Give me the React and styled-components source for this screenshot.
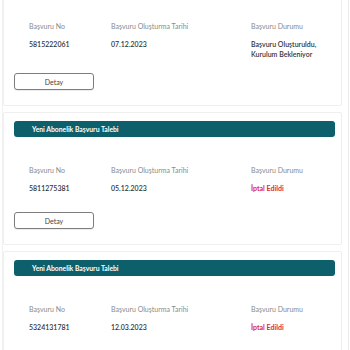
import React from "react";
import styled, { createGlobalStyle } from "styled-components";

const GlobalStyle = createGlobalStyle`
  html, body {
    margin: 0;
    padding: 0;
    background: #ffffff;
    overflow: hidden;
  }
  body {
    font-family: Lato, "Noto Sans", sans-serif;
  }
`;

const applications = [
  {
    no: "5815222061",
    date: "07.12.2023",
    status: "Başvuru Oluşturuldu, Kurulum Bekleniyor",
    cancelled: false,
  },
  {
    no: "5811275381",
    date: "05.12.2023",
    status: "İptal Edildi",
    cancelled: true,
  },
  {
    no: "5324131781",
    date: "12.03.2023",
    status: "İptal Edildi",
    cancelled: true,
  },
];

export default function App() {
  return (
    <>
      <GlobalStyle />
      <Page>
        <List>
          {applications.map((app) => (
            <Card key={app.no}>
              <CardHeader>Yeni Abonelik Başvuru Talebi</CardHeader>
              <InfoRow>
                <Cell>
                  <Label>Başvuru No</Label>
                  <Value>{app.no}</Value>
                </Cell>
                <Cell>
                  <Label>Başvuru Oluşturma Tarihi</Label>
                  <Value>{app.date}</Value>
                </Cell>
                <Cell>
                  <Label>Başvuru Durumu</Label>
                  <Value $danger={app.cancelled}>{app.status}</Value>
                </Cell>
              </InfoRow>
              <DetailButton type="button">Detay</DetailButton>
            </Card>
          ))}
        </List>
      </Page>
    </>
  );
}

const Page = styled.div`
  width: 345px;
  height: 350px;
  margin-left: 2px;
  border-left: 1px solid #f1f1f1;
  border-right: 1px solid #ececec;
  overflow: hidden;
`;

const List = styled.div`
  display: flex;
  flex-direction: column;
  gap: 6px;
  margin-top: -32px;
  padding-right: 6px;
`;

const Card = styled.article`
  display: flex;
  flex-direction: column;
  align-items: flex-start;
  background: #ffffff;
  border: 1px solid #efefef;
  border-radius: 2px;
  padding: 8px 6px 15px 10px;
`;

const CardHeader = styled.header`
  align-self: stretch;
  height: 16px;
  display: flex;
  align-items: center;
  padding-left: 18px;
  background: #0d5f6c;
  border-radius: 3px;
  color: #ffffff;
  font-size: 6.8px;
  font-weight: 700;
`;

const InfoRow = styled.div`
  display: grid;
  grid-template-columns: 82px 140px 1fr;
  align-self: stretch;
  margin-top: 29px;
  padding-left: 15px;
`;

const Cell = styled.div`
  display: flex;
  flex-direction: column;
  gap: 8px;
`;

const Label = styled.span`
  font-size: 7px;
  line-height: 9px;
  color: #8a8a8a;
`;

const Value = styled.span`
  min-height: 15px;
  max-width: 90px;
  font-size: 7px;
  line-height: 10px;
  font-weight: ${(p) => (p.$danger ? 700 : 600)};
  color: ${(p) => (p.$danger ? "#d8283f" : "#353535")};
`;

const DetailButton = styled.button`
  width: 80px;
  height: 17px;
  margin-top: 14px;
  padding: 0;
  background: #ffffff;
  border: 1px solid #7d7d7d;
  border-radius: 3px;
  box-shadow: 0 1px 1px rgba(0, 0, 0, 0.08);
  font-family: Lato, "Noto Sans", sans-serif;
  font-size: 7px;
  color: #444444;
  cursor: pointer;
`;
